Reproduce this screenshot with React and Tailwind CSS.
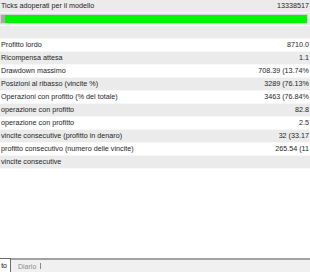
const rows = [
  ['Profitto lordo', '8710.0'],
  ['Ricompensa attesa', '1.1'],
  ['Drawdown massimo', '708.39 (13.74%'],
  ['Posizioni al ribasso (vincite %)', '3289 (76.13%'],
  ['Operazioni con profitto (% del totale)', '3463 (76.84%'],
  ['operazione con profitto', '82.8'],
  ['operazione con profitto', '2.5'],
  ['vincite consecutive (profitto in denaro)', '32 (33.17'],
  ['profitto consecutivo (numero delle vincite)', '265.54 (11'],
  ['vincite consecutive', ''],
]

function Row({ label, value, shade }) {
  return (
    <div
      className={
        'h-[13px] flex items-center justify-between pl-[1px] pr-[1px] border-b border-[#f7f7f7] ' +
        (shade ? 'bg-[#ebebeb]' : 'bg-white')
      }
    >
      <span className="whitespace-nowrap">{label}</span>
      <span className="whitespace-nowrap">{value}</span>
    </div>
  )
}

export default function App() {
  return (
    <div className="w-[310px] h-[272px] overflow-hidden bg-white flex flex-col text-[7.2px] leading-none text-[#1e1e1e] font-['Liberation_Sans',Arial,sans-serif]">
      <div className="flex flex-col">
        <Row label="Ticks adoperati per il modello" value="13338517" shade />
        <div className="h-[13px] bg-[#ebebeb] border-b border-[#f7f7f7] flex items-center pr-[2px]">
          <div className="flex-1 h-[10px] flex border border-[#d6d6d6] bg-[#e6e6e6]">
            <div className="w-[4px] bg-[#a8a8a8]" />
            <div className="flex-1 bg-[#00f500]" />
          </div>
        </div>
        <Row label="" value="" shade />
        {rows.map(([label, value], i) => (
          <Row key={i} label={label} value={value} shade={i % 2 === 1} />
        ))}
      </div>
      <div className="flex-1" />
      <div className="h-[14px] flex items-stretch bg-[#f0f0f0] border-t-2 border-[#a3a3a3] text-[7px]">
        <div className="-mt-[2px] w-[11px] bg-white border-r border-t border-[#6d6d6d] flex items-center justify-end pr-[3px] text-[#111]">
          to
        </div>
        <div className="pl-[7px] pr-[4px] flex items-center text-[#8a8a8a]">Diario</div>
        <div className="my-[3px] w-px bg-[#8a8a8a]" />
      </div>
    </div>
  )
}
